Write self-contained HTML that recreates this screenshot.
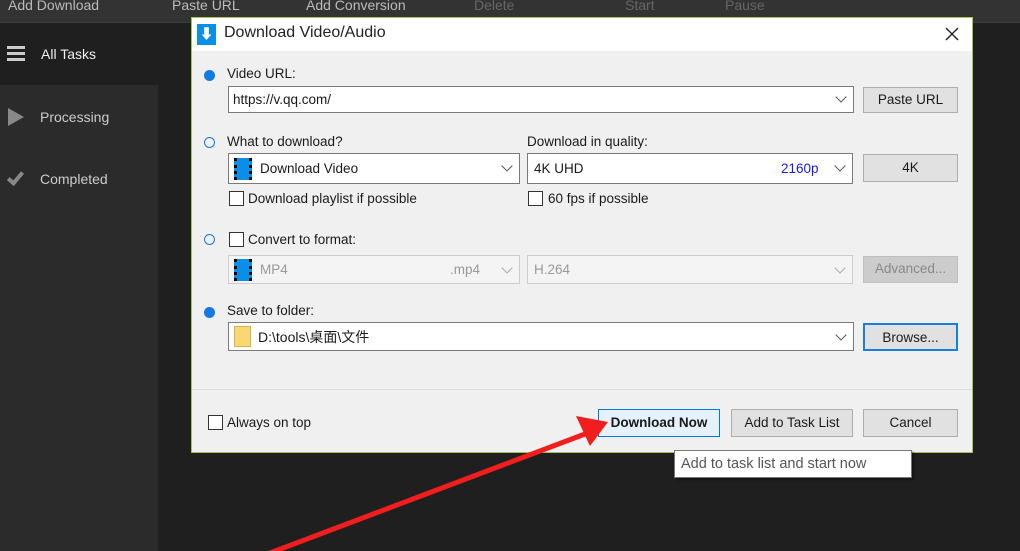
<!DOCTYPE html>
<html><head><meta charset="utf-8"><style>
*{box-sizing:border-box;margin:0;padding:0}
body{width:1020px;height:551px;overflow:hidden;background:#1f1f1f;font-family:"Liberation Sans","Noto Sans CJK SC",sans-serif;font-size:13.5px;color:#1a1a1a;position:relative}
.a{position:absolute}
.top{left:0;top:0;width:1020px;height:23px;background:#333;border-bottom:1px solid #3c3c3c;color:#bbb;font-size:14px}
.top span{position:absolute;top:-3px}
.side{left:0;top:85px;width:158px;height:466px;background:#2b2b2b}
.st{color:#ccc;font-size:14px}
.dlg{left:191px;top:17px;width:782px;height:436px;background:#f0f0f0;border:1px solid #9ec35a}
.tb{left:0;top:0;width:780px;height:33px;background:#fff}
.box{position:absolute;background:#fff;border:1px solid #7a7a7a;height:27px}
.dis{background:#f4f4f4;border-color:#ccc;color:#999}
.btn{position:absolute;background:#e1e1e1;border:1px solid #adadad;height:26px;text-align:center;line-height:24px;font-size:13.5px}
.cb{position:absolute;width:15px;height:15px;border:1px solid #333;background:#fff}
.rd{position:absolute;width:11px;height:11px;border-radius:50%}
.chev{position:absolute;top:6px;width:8px;height:8px;border-right:1.3px solid #555;border-bottom:1.3px solid #555;transform:rotate(45deg)}
.film{position:absolute;width:18px;height:22px;background:#0a8fe8;border-left:3px dotted #000;border-right:3px dotted #000}
.t{position:absolute;white-space:nowrap}
</style></head><body>
<div class="a top"><span style="left:8px">Add Download</span><span style="left:172px">Paste URL</span><span style="left:306px">Add Conversion</span><span style="left:474px;color:#666">Delete</span><span style="left:625px;color:#666">Start</span><span style="left:725px;color:#666">Pause</span></div>
<div class="a side"></div>
<div class="a" style="left:7px;top:46px;width:18px;height:3px;background:#ccc;box-shadow:0 6px 0 #ccc,0 12px 0 #ccc"></div>
<div class="a st" style="left:41px;top:46px;color:#eee">All Tasks</div>
<div class="a" style="left:8px;top:108px;border-left:16px solid #888;border-top:9px solid transparent;border-bottom:9px solid transparent"></div>
<div class="a st" style="left:40px;top:109px">Processing</div>
<div class="a" style="left:8px;top:169px;width:9px;height:16px;border-right:4px solid #888;border-bottom:4px solid #888;transform:rotate(40deg);left:11px"></div>
<div class="a st" style="left:40px;top:171px">Completed</div>

<div class="a dlg">
<div class="a tb"></div>
<div class="a" style="left:5px;top:6px;width:19px;height:21px;background:#0a8fe8;color:#fff;font-size:14px;text-align:center;font-weight:bold;line-height:20px">⬇</div>
<div class="t" style="left:32px;top:6px;font-size:16px;color:#222">Download Video/Audio</div>
<svg class="a" style="left:753px;top:9px" width="14" height="14"><path d="M1 1L13 13M13 1L1 13" stroke="#222" stroke-width="1.4"/></svg>

<div class="rd" style="left:12px;top:52px;background:#1579e5"></div>
<div class="t" style="left:35px;top:48px">Video URL:</div>
<div class="box" style="left:36px;top:68px;width:626px"><div class="t" style="left:4px;top:5px">https://v.qq.com/</div><div class="chev" style="right:8px"></div></div>
<div class="btn" style="left:671px;top:69px;width:95px">Paste URL</div>

<div class="rd" style="left:12px;top:119px;border:1.5px solid #1579e5"></div>
<div class="t" style="left:35px;top:116px">What to download?</div>
<div class="t" style="left:335px;top:116px">Download in quality:</div>
<div class="box" style="left:36px;top:135px;width:292px;height:31px"><div class="film" style="left:5px;top:4px"></div><div class="t" style="left:31px;top:7px">Download Video</div><div class="chev" style="right:8px;top:8px"></div></div>
<div class="box" style="left:335px;top:135px;width:326px;height:31px"><div class="t" style="left:6px;top:7px">4K UHD</div><div class="t" style="left:253px;top:7px;color:#1a1ae6">2160p</div><div class="chev" style="right:8px;top:8px"></div></div>
<div class="btn" style="left:671px;top:136px;width:95px;height:28px;line-height:26px">4K</div>
<div class="cb" style="left:37px;top:173px"></div><div class="t" style="left:56px;top:173px">Download playlist if possible</div>
<div class="cb" style="left:336px;top:173px"></div><div class="t" style="left:356px;top:173px">60 fps if possible</div>

<div class="rd" style="left:12px;top:216px;border:1.5px solid #1579e5"></div>
<div class="cb" style="left:37px;top:214px"></div><div class="t" style="left:56px;top:214px">Convert to format:</div>
<div class="box dis" style="left:36px;top:237px;width:292px;height:29px"><div class="film" style="left:5px;top:3px"></div><div class="t" style="left:31px;top:6px">MP4</div><div class="t" style="left:221px;top:6px">.mp4</div><div class="chev" style="right:8px;top:8px;border-color:#aaa"></div></div>
<div class="box dis" style="left:335px;top:237px;width:326px;height:29px"><div class="t" style="left:6px;top:6px">H.264</div><div class="chev" style="right:8px;top:8px;border-color:#aaa"></div></div>
<div class="btn" style="left:671px;top:238px;width:95px;height:27px;background:#ccc;border-color:#bfbfbf;color:#888">Advanced...</div>

<div class="rd" style="left:12px;top:289px;background:#1579e5"></div>
<div class="t" style="left:35px;top:285px">Save to folder:</div>
<div class="box" style="left:36px;top:304px;width:626px;height:29px"><div class="a" style="left:5px;top:3px;width:17px;height:21px;background:#f8d775;border:1px solid #d8b44a"></div><div class="t" style="left:29px;top:4px;font-size:14px">D:\tools\桌面\文件</div><div class="chev" style="right:8px;top:8px"></div></div>
<div class="btn" style="left:671px;top:305px;width:95px;height:28px;line-height:26px;border:2px solid #1a7fd8">Browse...</div>

<div class="a" style="left:0;top:371px;width:780px;height:1px;background:#ddd"></div>
<div class="cb" style="left:16px;top:397px"></div><div class="t" style="left:35px;top:397px">Always on top</div>
<div class="btn" style="left:406px;top:391px;width:122px;height:28px;line-height:26px;background:#e5f1fb;border-color:#0078d7;font-weight:bold">Download Now</div>
<div class="btn" style="left:539px;top:391px;width:122px;height:28px;line-height:26px">Add to Task List</div>
<div class="btn" style="left:671px;top:391px;width:95px;height:28px;line-height:26px">Cancel</div>
</div>

<div class="a" style="left:674px;top:450px;width:238px;height:28px;background:#fff;border:1px solid #767676;color:#555;font-size:14.5px;padding:5px 0 0 6px;box-shadow:2px 2px 2px rgba(0,0,0,.4)">Add to task list and start now</div>

<svg class="a" style="left:0;top:0" width="1020" height="551"><line x1="262" y1="556" x2="585" y2="434" stroke="#f21d1d" stroke-width="5"/><polygon points="608,422 576,416 590,446" fill="#f21d1d"/></svg>
</body></html>
